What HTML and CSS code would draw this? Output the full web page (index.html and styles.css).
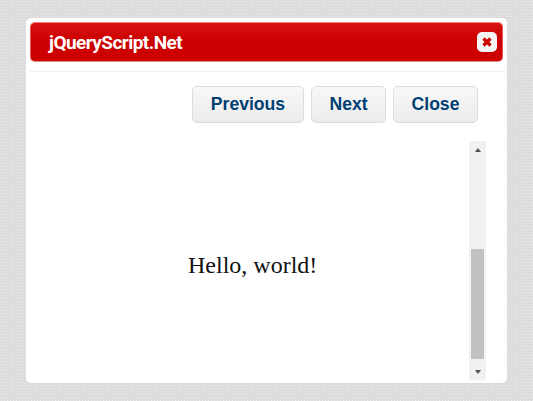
FILE: index.html
```html
<!DOCTYPE html>
<html lang="en">
<head>
    <meta charset="UTF-8">
    <title>jQueryScript.Net</title>
    <link rel="stylesheet" href="styles.css">
</head>
<body>
    <div class="dialog">
        <div class="titlebar">
            <span class="title">jQueryScript.Net</span>
            <button class="close-icon" aria-label="Close">
                <svg width="12" height="12" viewBox="0 0 12 12">
                    <path d="M2.5 2.5L9.5 9.5M9.5 2.5L2.5 9.5" stroke="#cc0000" stroke-width="3.2" fill="none"/>
                </svg>
            </button>
        </div>
        <div class="buttons">
            <button class="btn btn-prev">Previous</button>
            <button class="btn btn-next">Next</button>
            <button class="btn btn-close">Close</button>
        </div>
        <div class="body">
            <div class="content">Hello, world!</div>
            <div class="scrollbar">
                <div class="arrow arrow-up"></div>
                <div class="track"><div class="thumb"></div></div>
                <div class="arrow arrow-down"></div>
            </div>
        </div>
    </div>
</body>
</html>
```

FILE: styles.css
```css
* { margin: 0; padding: 0; box-sizing: border-box; }

body {
    width: 533px;
    height: 401px;
    overflow: hidden;
    padding: 18px 26px;
    background-color: #dcdcdc;
    background-image: radial-gradient(circle at 1.5px 1.5px, #ebebeb 0.7px, transparent 1px);
    background-size: 3px 3px;
}

.dialog {
    width: 481px;
    height: 365px;
    background: #fff;
    border-radius: 5px;
    padding: 4px;
}

.titlebar {
    height: 40px;
    display: flex;
    align-items: center;
    justify-content: space-between;
    padding: 0 5px 0 18px;
    background: linear-gradient(#d81414, #cc0000 45%);
    border: 1px solid #e8554f;
    border-top-color: #f07a74;
    border-bottom-color: #e0908c;
    border-radius: 5px;
}

.title {
    font-family: Roboto, sans-serif;
    font-weight: 700;
    font-size: 19px;
    letter-spacing: -0.55px;
    color: #fff;
}

.close-icon {
    width: 20px;
    height: 20px;
    display: flex;
    align-items: center;
    justify-content: center;
    background: #f4f4f4;
    border: none;
    border-radius: 5px;
}

.buttons {
    display: flex;
    justify-content: flex-end;
    gap: 7px;
    margin-top: 9px;
    padding: 14px 25px 0 0;
    border-top: 1px solid #eee;
}

.btn {
    height: 37px;
    font-family: "Liberation Sans", Arial, sans-serif;
    font-weight: 700;
    font-size: 17.6px;
    color: #003f74;
    background: linear-gradient(#f8f8f8, #ebebeb);
    border: 1px solid #dcdcdc;
    border-radius: 5px;
}

.btn-prev { width: 112px; }
.btn-next { width: 75px; }
.btn-close { width: 85px; }

.body {
    display: flex;
    height: 239px;
    margin-top: 18px;
    padding-right: 17px;
}

.content {
    flex: 1;
    padding: 111px 0 0 158px;
    font-family: "Liberation Serif", "Times New Roman", serif;
    font-size: 24px;
    color: #111;
}

.scrollbar {
    width: 17px;
    display: flex;
    flex-direction: column;
    background: #f1f1f1;
}

.arrow {
    height: 17px;
    display: flex;
    align-items: center;
    justify-content: center;
}

.arrow::before {
    content: "";
    border-left: 3.5px solid transparent;
    border-right: 3.5px solid transparent;
}

.arrow-up::before { border-bottom: 4px solid #505050; }
.arrow-down::before { border-top: 4px solid #505050; }

.track {
    flex: 1;
    display: flex;
    flex-direction: column;
    justify-content: flex-end;
}

.thumb {
    width: 13px;
    height: 110px;
    margin-left: 2px;
    margin-bottom: 4px;
    background: #c1c1c1;
}
```
